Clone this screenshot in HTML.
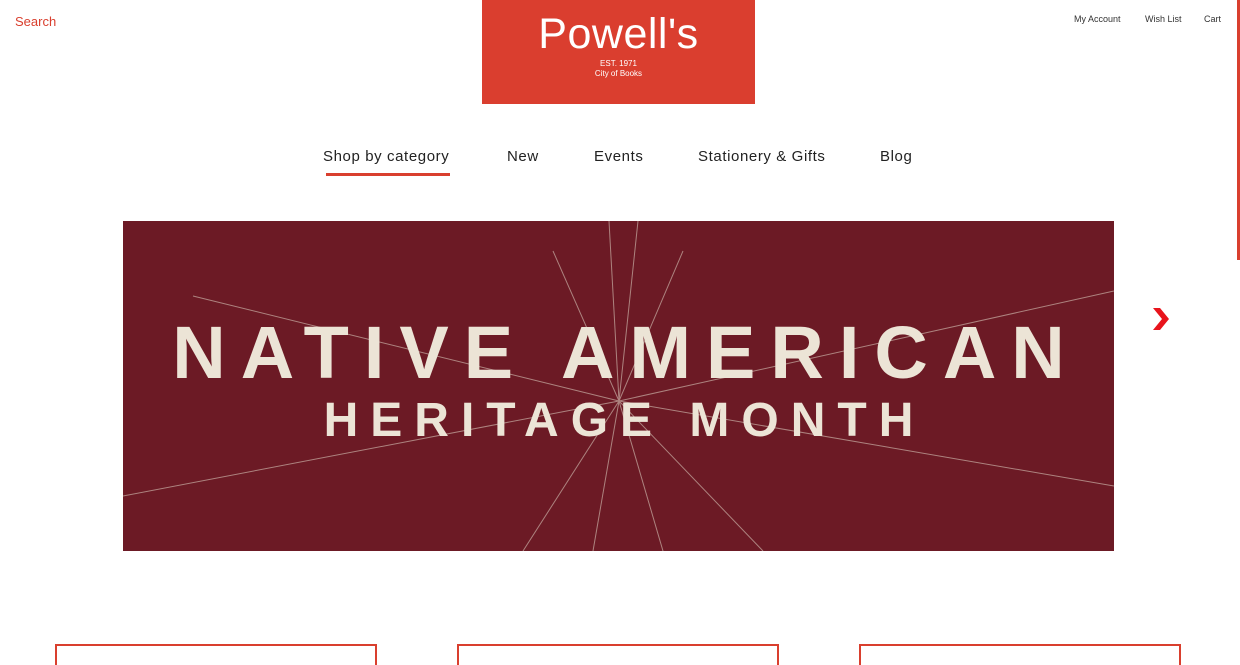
<!DOCTYPE html>
<html><head><style>
*{margin:0;padding:0;box-sizing:border-box}
html,body{width:1240px;height:665px;overflow:hidden}
body{background:#fff;font-family:"Liberation Sans",sans-serif;position:relative}
.a{position:absolute}
.n{font-size:15px;color:#222;letter-spacing:0.6px;top:148px}
</style></head><body>
<div class="a" style="left:15px;top:14px;color:#d93f2e;font-size:13px">Search</div>
<div class="a" style="left:482px;top:0;width:273px;height:104px;background:#da3e2f;color:#fff;text-align:center">
<div style="font-size:43px;margin-top:11px;line-height:46px;letter-spacing:0.5px">Powell's</div>
<div style="font-size:8px;margin-top:2px;line-height:10px">EST. 1971<br>City of Books</div>
</div>
<div class="a" style="left:1074px;top:14px;font-size:9px;color:#333">My Account</div>
<div class="a" style="left:1145px;top:14px;font-size:9px;color:#333">Wish List</div>
<div class="a" style="left:1204px;top:14px;font-size:9px;color:#333">Cart</div>
<div class="a" style="left:1237px;top:0;width:3px;height:260px;background:#d93f2e"></div>
<div class="a n" style="left:323px">Shop by category</div>
<div class="a" style="left:326px;top:173px;width:124px;height:3px;background:#d93f2e"></div>
<div class="a n" style="left:507px">New</div>
<div class="a n" style="left:594px">Events</div>
<div class="a n" style="left:698px">Stationery &amp; Gifts</div>
<div class="a n" style="left:880px">Blog</div>
<div class="a" style="left:123px;top:221px;width:991px;height:330px;background:#6c1a25;overflow:hidden">
<svg width="991" height="330" style="position:absolute;left:0;top:0">
<g stroke="#d9c9bc" stroke-width="1" opacity="0.6">
<line x1="496" y1="180" x2="486" y2="0"/><line x1="496" y1="180" x2="515" y2="0"/><line x1="496" y1="180" x2="430" y2="30"/><line x1="496" y1="180" x2="560" y2="30"/>
<line x1="496" y1="180" x2="0" y2="275"/><line x1="496" y1="180" x2="991" y2="265"/><line x1="496" y1="180" x2="991" y2="70"/><line x1="496" y1="180" x2="70" y2="75"/>
<line x1="496" y1="180" x2="400" y2="330"/><line x1="496" y1="180" x2="640" y2="330"/><line x1="496" y1="180" x2="470" y2="330"/><line x1="496" y1="180" x2="540" y2="330"/>
</g></svg>
<div class="a" style="left:0;top:92px;width:991px;text-align:center;color:#ece4d6;font-weight:bold;font-size:74px;letter-spacing:15px;text-indent:15px;line-height:80px">NATIVE AMERICAN</div>
<div class="a" style="left:0;top:172px;width:991px;text-align:center;color:#ece4d6;font-weight:bold;font-size:48px;letter-spacing:12px;text-indent:12px;line-height:56px">HERITAGE MONTH</div>
</div>
<svg class="a" style="left:1151px;top:306px" width="20" height="26"><path d="M2 2 L9 2 L18 13 L9 24 L2 24 L11 13 Z" fill="#e8141c"/></svg>
<div class="a" style="left:55px;top:644px;width:322px;height:40px;border:2px solid #d93f2e"></div>
<div class="a" style="left:457px;top:644px;width:322px;height:40px;border:2px solid #d93f2e"></div>
<div class="a" style="left:859px;top:644px;width:322px;height:40px;border:2px solid #d93f2e"></div>
</body></html>
